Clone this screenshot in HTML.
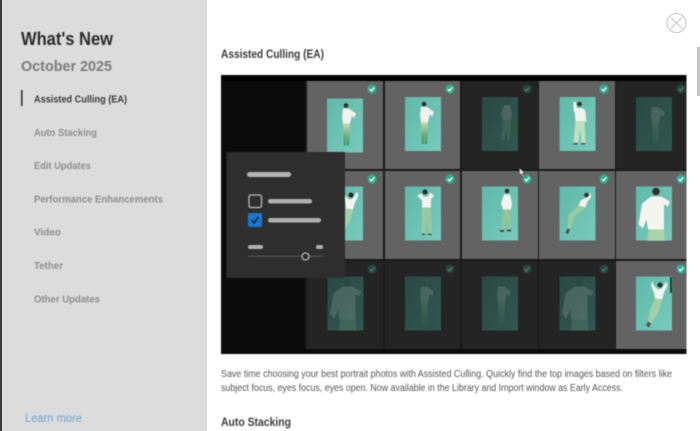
<!DOCTYPE html>
<html><head><meta charset="utf-8"><style>
html,body{margin:0;padding:0;width:700px;height:431px;overflow:hidden;background:#fff}
svg{display:block}
text{font-family:"Liberation Sans",sans-serif}
.b{filter:blur(.45px)}
.f{filter:blur(.5px)}
</style></head><body>
<svg width="700" height="431" viewBox="0 0 700 431" xmlns="http://www.w3.org/2000/svg">
<defs>
<linearGradient id="teal" x1="0" y1="0" x2="1" y2="1"><stop offset="0" stop-color="#5fb9a9"/><stop offset="1" stop-color="#78cabd"/></linearGradient>
<linearGradient id="dk" x1="0" y1="0" x2="1" y2="1"><stop offset="0" stop-color="#2a4a43"/><stop offset="1" stop-color="#32574f"/></linearGradient>
<linearGradient id="pant" x1="0" y1="0" x2="0" y2="1"><stop offset="0" stop-color="#c9dcb8"/><stop offset=".55" stop-color="#6fae7c"/><stop offset="1" stop-color="#3d8f5e"/></linearGradient>
<rect id="ph" width="36" height="54" fill="url(#teal)"/>
<rect id="pd" width="36" height="54" fill="url(#dk)"/>
<g id="stand">
<circle cx="19" cy="7" r="2.300" fill="#3a2c26"/>
<path d="M16 10 L22 10 L29 15 L27 20 L25 17 L23 25 L16 25 L15 18 Z" fill="#f2f2ec"/>
<path d="M16 25 L23 25 L22 47 L20 47 L19.500 34 L19 47 L17 47 Z" fill="url(#pant)"/>
</g>
<g id="hands">
<circle cx="20" cy="5.500" r="2.500" fill="#2c2420"/>
<path d="M12 9 L17 7 L18 10 L23 10 L25 6 L29 9 L26 13 L26 21 L17 21 L17 14 Z" fill="#f2f2ec"/>
<path d="M17 21 L26 21 L27 47 L23 47 L21.500 30 L20.500 47 L16.500 47 Z" fill="#9cc8a0"/>
<path d="M17 47 h3 v1.500 h-3z M23 47 h3.500 v1.500 h-3.500z" fill="#4a4a40"/>
</g>
<g id="armup">
<circle cx="20" cy="7" r="2.300" fill="#3a2c26"/>
<path d="M14 5 L16 4.500 L17.500 11 L23 11 L26 14 L27 26 L25.500 24 L25 24 L16 24 L15.500 17 L14 13 Z" fill="#f2f2ec"/>
<path d="M16 24 L25 24 L26 46 L22 46 L20.500 32 L19 46 L14 46 Z" fill="#bfe0bd"/>
<path d="M14 46 h4 v1.500 h-4z M22 46 h3.500 v1.500 h-3.500z" fill="#4a4a40"/>
</g>
<g id="side">
<circle cx="25" cy="4.500" r="2.300" fill="#3a2c26"/>
<path d="M22 8 L28 8 L30 17 L29 23 L21 23 L19 17 Z" fill="#f4f4ee"/>
<path d="M21 23 L29 23 L28 43 L25.500 43 L25 32 L22 43.500 L19.500 43.500 Z" fill="#93c596"/>
<path d="M18 43.500 h4 v2 h-4z M25 43 h4 v2 h-4z" fill="#4a4a40"/>
</g>
<g id="lie">
<circle cx="27" cy="8.500" r="2.300" fill="#3a2c26"/>
<path d="M31 6 L31.500 11 L28 15 L26 21 L19 19 L21 14 L25 12 L29 10Z" fill="#f3f3ee"/>
<path d="M19 19 L26 21 L15 30 L10 44 L8 43 L9 29 Z" fill="#9ccba0"/>
<path d="M8 42 l2.500 1 l-2 4.500 l-2.500 -1z" fill="#4a4a40"/>
</g>
<g id="close">
<circle cx="20" cy="5" r="3.800" fill="#3a2c26"/>
<path d="M15 10 L25 10 L34 15 L32 20 L28 18 L28 43 L12 43 L10.500 33 L7 42 L2.500 38 L6 17 Z" fill="#f5f5f0"/>
<path d="M13 43 L28 43 L29 54 L11 54 Z" fill="#a9d3a8"/>
</g>
<g id="tilt">
<circle cx="24" cy="8.500" r="2.500" fill="#2c2420"/>
<path d="M16 4.500 L18 9 L22 13 L26 12 L30 5 L31.500 9 L28 16 L26 23 L19 22 L18 16 L15 9Z" fill="#f4f4ee"/>
<path d="M19 22 L26 23 L23 35 L15 47 L12 45 L14 34 Z" fill="#a3d1a5"/>
<path d="M12 45 l3 2 l-2 4 l-3 -2z" fill="#5a5040"/>
</g>
<g id="ck">
<circle r="4.600" fill="#2fae8f"/>
<path d="M-2.300 .1 L-.6 1.900 L2.400 -1.700" fill="none" stroke="#fff" stroke-width="1.300"/>
</g>
<g id="ckd">
<circle r="4.600" fill="#26433c"/>
<path d="M-2.300 .1 L-.6 1.900 L2.400 -1.700" fill="none" stroke="#4c7f70" stroke-width="1.300"/>
</g>
</defs>

<!-- sidebar -->
<rect x="0" y="0" width="2" height="431" fill="#3a3a3a"/>
<rect x="2" y="0" width="205" height="431" fill="#dcdcdc"/>
<g class="b">
<text x="21" y="45" font-size="18" font-weight="700" fill="#2b2b2b" textLength="92" lengthAdjust="spacingAndGlyphs">What's New</text>
<text x="21" y="71" font-size="15" font-weight="700" fill="#7b7b7b" textLength="91" lengthAdjust="spacingAndGlyphs">October 2025</text>
<rect x="21" y="90" width="1.600" height="16" fill="#333"/>
<g font-size="10.500" font-weight="700" fill="#8e8e8e">
<text x="34" y="102.500" fill="#3a3a3a" textLength="93" lengthAdjust="spacingAndGlyphs">Assisted Culling (EA)</text>
<text x="34" y="136" textLength="63" lengthAdjust="spacingAndGlyphs">Auto Stacking</text>
<text x="34" y="169" textLength="57" lengthAdjust="spacingAndGlyphs">Edit Updates</text>
<text x="34" y="202.500" textLength="129" lengthAdjust="spacingAndGlyphs">Performance Enhancements</text>
<text x="34" y="235.500" textLength="27" lengthAdjust="spacingAndGlyphs">Video</text>
<text x="34" y="269" textLength="29" lengthAdjust="spacingAndGlyphs">Tether</text>
<text x="34" y="302.500" textLength="66" lengthAdjust="spacingAndGlyphs">Other Updates</text>
</g>
<text x="25" y="422" font-size="11.500" fill="#6ea3cf" textLength="57" lengthAdjust="spacingAndGlyphs">Learn more</text>

<!-- main text -->
<text x="221" y="58" font-size="11.500" font-weight="700" fill="#3a3a3a" textLength="103" lengthAdjust="spacingAndGlyphs">Assisted Culling (EA)</text>
<text x="221" y="377" font-size="9.800" fill="#555" textLength="451" lengthAdjust="spacingAndGlyphs">Save time choosing your best portrait photos with Assisted Culling. Quickly find the top images based on filters like</text>
<text x="221" y="391" font-size="9.800" fill="#555" textLength="402" lengthAdjust="spacingAndGlyphs">subject focus, eyes focus, eyes open. Now available in the Library and Import window as Early Access.</text>
<text x="221" y="426" font-size="11.500" font-weight="700" fill="#3a3a3a" textLength="70" lengthAdjust="spacingAndGlyphs">Auto Stacking</text>
</g>

<!-- close -->
<circle cx="676.500" cy="23" r="9.500" fill="none" stroke="#c9c9c9" stroke-width="1.100"/>
<path d="M671 17.500 L682 28.500 M682 17.500 L671 28.500" stroke="#c9c9c9" stroke-width="1.100" fill="none"/>

<!-- scrollbar -->
<rect x="697" y="47" width="3" height="49" fill="#c4c4c4"/>

<!-- image -->
<g class="b">
<rect x="221" y="75" width="465.500" height="279" fill="#0b0b0b"/>
<rect x="221" y="75" width="465.500" height="6" fill="#020202"/>
<rect x="305" y="81" width="381.500" height="268" fill="#191919"/>
<rect x="307" y="81" width="76" height="88" fill="#636363"/>
<rect x="385" y="81" width="75" height="88" fill="#636363"/>
<rect x="462" y="81" width="76" height="88" fill="#242424"/>
<rect x="539" y="81" width="76" height="88" fill="#636363"/>
<rect x="616" y="81" width="70.500" height="88" fill="#242424"/>
<rect x="307" y="171" width="76" height="88" fill="#636363"/>
<rect x="385" y="171" width="75" height="88" fill="#636363"/>
<rect x="462" y="171" width="76" height="88" fill="#636363"/>
<rect x="539" y="171" width="76" height="88" fill="#636363"/>
<rect x="616" y="171" width="70.500" height="88" fill="#636363"/>
<rect x="307" y="261" width="76" height="88" fill="#242424"/>
<rect x="385" y="261" width="75" height="88" fill="#242424"/>
<rect x="462" y="261" width="76" height="88" fill="#242424"/>
<rect x="539" y="261" width="76" height="88" fill="#242424"/>
<rect x="616" y="261" width="70.500" height="88" fill="#636363"/>

<use href="#ph" x="327" y="98.500"/><use href="#ph" x="405" y="97"/><use href="#ph" x="559.500" y="97"/>
<use href="#pd" x="482" y="97"/><use href="#pd" x="636" y="97"/>
<use href="#ph" x="327" y="186.500"/><use href="#ph" x="405" y="186.500"/><use href="#ph" x="482" y="186.500"/><use href="#ph" x="559.500" y="186.500"/><use href="#ph" x="636" y="186.500"/>
<use href="#pd" x="327.500" y="276.500"/><use href="#pd" x="405" y="276.500"/><use href="#pd" x="482" y="276.500"/><use href="#pd" x="559.500" y="276.500"/>
<use href="#ph" x="636" y="276.500"/>
</g>
<g class="f">
<use href="#stand" x="327" y="98.500"/>
<use href="#stand" x="405" y="97"/>
<use href="#armup" x="559.500" y="97"/>
<g opacity=".14"><use href="#side" x="482" y="97"/><use href="#stand" x="636" y="97"/></g>
<use href="#tilt" x="327" y="186.500"/>
<use href="#hands" x="405" y="186.500"/>
<use href="#side" x="482" y="186.500"/>
<use href="#lie" x="559.500" y="186.500"/>
<use href="#close" x="636" y="186.500"/>
<g opacity=".14"><use href="#close" x="327.500" y="276.500"/><use href="#stand" x="405" y="276.500"/><use href="#stand" x="482" y="276.500"/><use href="#close" x="559.500" y="276.500"/></g>
<use href="#tilt" x="636" y="276.500"/>
<rect x="670" y="277" width="2" height="16" fill="#123c34"/>
</g>
<g class="b">
<use href="#ck" x="372" y="89"/><use href="#ck" x="450" y="89"/><use href="#ck" x="604" y="89"/>
<use href="#ckd" x="527" y="89"/><use href="#ckd" x="681" y="89"/>
<use href="#ck" x="372" y="179"/><use href="#ck" x="450" y="179"/><use href="#ck" x="527" y="179"/><use href="#ck" x="604" y="179"/><use href="#ck" x="681" y="179"/>
<use href="#ckd" x="372" y="269"/><use href="#ckd" x="450" y="269"/><use href="#ckd" x="527" y="269"/><use href="#ckd" x="604" y="269"/>
<use href="#ck" x="681" y="269"/>

<!-- cursor -->
<path d="M519.500 168 L519.500 175 L521.300 173.500 L523 177 L524 176.500 L522.500 173 L524.500 173 Z" fill="#f2f2f2" stroke="#222" stroke-width=".4"/>

<!-- panel -->
<rect x="226.500" y="152" width="118.500" height="126" fill="#2e2e2e"/>
<rect x="247" y="172" width="44" height="5" rx="2.500" fill="#b4b4b4"/>
<rect x="249" y="195" width="12.500" height="12.500" rx="1.800" fill="none" stroke="#a8a8a8" stroke-width="1.500"/>
<rect x="268" y="199" width="44" height="4.500" rx="2.200" fill="#b0b0b0"/>
<rect x="248" y="213" width="14" height="14" rx="2" fill="#1b78d0"/>
<path d="M251.500 220 L254 223 L258.500 217" fill="none" stroke="#13233a" stroke-width="1.600"/>
<rect x="268" y="218" width="53" height="4.500" rx="2.200" fill="#b0b0b0"/>
<rect x="248" y="245" width="15" height="4" rx="2" fill="#b0b0b0"/>
<rect x="316" y="245" width="7" height="4" rx="2" fill="#b0b0b0"/>
<rect x="248" y="255.700" width="75" height="1" fill="#5c5c5c"/>
<circle cx="305.500" cy="256.500" r="3.500" fill="#2e2e2e" stroke="#d0d0d0" stroke-width="1.100"/>
</g>
</svg>
</body></html>
